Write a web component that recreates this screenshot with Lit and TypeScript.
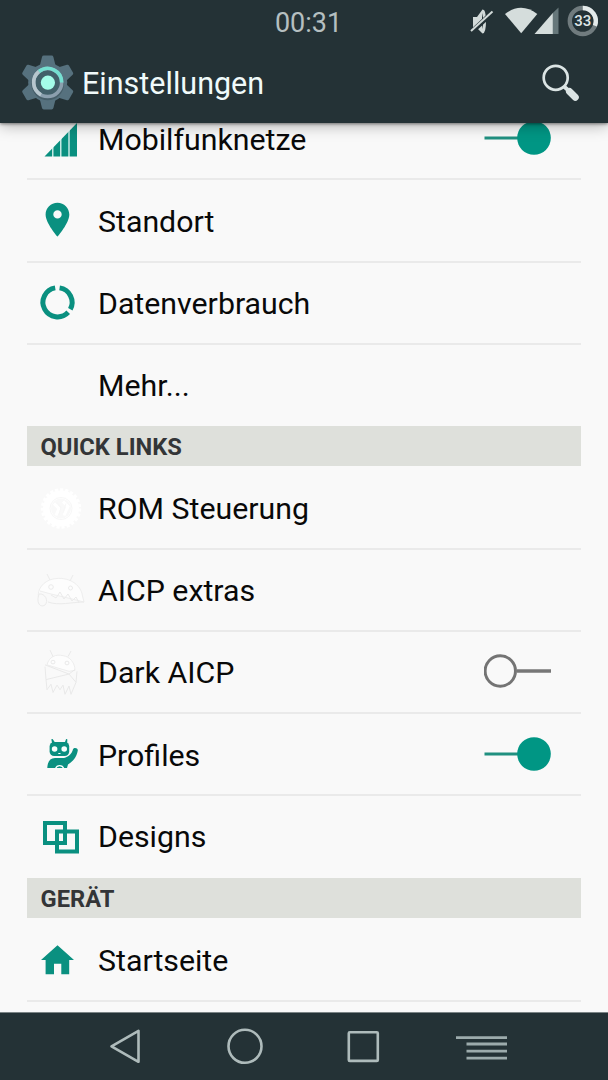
import { LitElement, html, css, svg, nothing, SVGTemplateResult } from "lit";
import { customElement, property } from "lit/decorators.js";

const TEAL = "#0a9080";

// Row icons are drawn on a 71x82 cell.
const icons: Record<string, SVGTemplateResult> = {
  signal: svg`<g transform="translate(0 -1)"><path fill=${TEAL} d="M17.5 59.5L50 26V59.5Z"/>
    <path stroke="#f4fffd" stroke-width="1.2" d="M25.8 48V60M33.8 40V60M42 32V60"/></g>`,
  pin: svg`<path transform="translate(0 -1.3)" fill=${TEAL} fill-rule="evenodd" d="M30.5 24C23.8 24 18.6 29.2 18.6 35.8C18.6 44.5 30.5 58 30.5 58S42.3 44.5 42.3 35.8C42.3 29.2 37.1 24 30.5 24ZM30.5 31.5a4.2 4.2 0 1 1 0 8.4a4.2 4.2 0 0 1 0-8.4Z"/>`,
  data: svg`<g transform="translate(0 -1.5)" fill="none" stroke=${TEAL} stroke-width="5">
    <path d="M32.6 26.4A14.6 14.6 0 0 1 43.3 47.8"/>
    <path d="M28.2 26.4A14.6 14.6 0 1 0 41.2 50.8"/></g>`,
  rom: svg`<g transform="translate(0 -.5)"><g fill="none" stroke="#ffffff"><circle cx="34" cy="42" r="14" stroke-width="8"/>
    <circle cx="34" cy="42" r="18.7" stroke-width="3" stroke-dasharray="3.1 2"/>
    <path stroke-width="3" d="M27 37l5 5-3 7M36 35l5 5-4 9"/></g>
    <g fill="none" stroke="#f7f7f7"><circle cx="34" cy="42" r="11"/><path d="M30 36l4 5-2 7M39 37l-3 9"/></g></g>`,
  extras: svg`<g transform="translate(0 1)"><path fill="#fdfdfd" stroke="#eeeeee" d="M11.5 46C10 39 16 30 26 28C41 25 54 33 55.5 45L57 51L41 47L24 43L13 40"/>
    <g fill="none" stroke="#ebebeb"><path d="M23 29L20 23M43 30L46 24M12 43C9 52 13 57 18 54C22 50 18 42 12 43M21 51C32 55 45 51 57 51M24 44L29 47L33 41L37 48L41 43L45 50L49 46L52 52"/>
    <circle cx="24" cy="36" r="2.3"/><circle cx="43.5" cy="37" r="2"/></g></g>`,
  dark: svg`<g transform="translate(0 2.5) scale(1 .92)"><path fill="#fdfdfd" stroke="#ececec" d="M20 33C22 24 29 21 36 23C43 24 48 31 48 39L42 40L20 33"/>
    <g fill="none" stroke="#e8e8e8"><path d="M26 24L23 17M41 24L44 18M18 33L42 43L48 38M18 35L19 49L42 43L49 52L50 40M19 49L20 60L24 54L26 63L30 55L33 60L36 55L38 65L42 56L44 65L49 52"/>
    <circle cx="26" cy="30" r="2"/><circle cx="40" cy="31" r="2"/></g></g>`,
  profiles: svg`<g transform="translate(0 1)"><g fill=${TEAL}>
    <path d="M25.2 28.5L24.3 24.3L25.6 24L28.4 28M37.6 28L39.1 24L40.3 24.3L40.2 29"/>
    <rect x="22.6" y="27" width="19.6" height="14" rx="4.5"/>
    <path d="M20.3 53C20.6 46.5 23 43 28 43H37C41.5 42 44.8 39 46 34.3C46.9 32.2 51 32.9 50.8 35.5C49.5 43 45 47 41 49.5L40 53Z"/></g>
    <g fill="#f6fffd"><circle cx="27.6" cy="34" r="2.8"/><circle cx="37.2" cy="34" r="2.8"/><path d="M31.3 38h2.2v1h-2.2z"/></g>
    <path fill="none" stroke="#f6fffd" stroke-width="1.2" d="M28.5 53.5A4.4 4.4 0 0 1 36.8 53.5"/></g>`,
  designs: svg`<g transform="translate(0 -.5)" fill="none" stroke=${TEAL} stroke-width="4"><rect x="18" y="27.5" width="20" height="20"/><rect x="30" y="36" width="20" height="20"/></g>`,
  home: svg`<path transform="translate(0 -1.7)" fill=${TEAL} d="M30.5 27L47 41.6H42.2V56H34.3V45.5H27V56H18.6V41.6H14Z"/>`,
};

@customElement("toggle-switch")
class ToggleSwitch extends LitElement {
  @property({ type: Boolean }) on = false;
  static styles = css`
    :host { display: block; width: 68px; height: 36px; }
    svg { display: block; }
  `;
  render() {
    return html`<svg width="68" height="36" viewBox="0 0 68 36">
      ${this.on
        ? svg`<path d="M.5 18H40" stroke="#209080" stroke-width="3.2"/><circle cx="50" cy="18" r="16.8" fill="#009684"/>`
        : svg`<path d="M33 18H67" stroke="#777" stroke-width="3.4"/><circle cx="16.3" cy="18" r="15.2" fill="none" stroke="#747474" stroke-width="3"/>`}
    </svg>`;
  }
}

@customElement("settings-row")
class SettingsRow extends LitElement {
  @property() icon = "";
  @property() label = "";
  @property() toggle = "";
  static styles = css`
    :host { display: block; }
    .row { display: flex; align-items: center; height: 82.25px; box-sizing: border-box; border-bottom: 2px solid #eaeaea; }
    :host([last]) .row { border-bottom-color: transparent; height: 81.25px; }
    .icon { width: 71px; height: 82px; flex: none; align-self: flex-start; }
    .label { flex: 1; font-size: 30.3px; line-height: 40px; color: #090909; white-space: nowrap; padding-top: 3px; }
    toggle-switch { margin-right: 29px; margin-bottom: 1px; }
  `;
  render() {
    return html`<div class="row">
      <svg class="icon" viewBox="0 0 71 82">${icons[this.icon] ?? nothing}</svg>
      <span class="label">${this.label}</span>
      ${this.toggle ? html`<toggle-switch ?on=${this.toggle === "on"}></toggle-switch>` : nothing}
    </div>`;
  }
}

@customElement("app-root")
class AppRoot extends LitElement {
  static styles = css`
    :host { display: flex; flex-direction: column; height: 1080px; width: 608px; overflow: hidden; background: #f9f9f9; font-family: Roboto, "Noto Sans", sans-serif; }
    .top { flex: none; height: 123px; background: #243236; position: relative; z-index: 1; box-shadow: 0 1px 3px rgba(0,0,0,.45), 0 3px 14px rgba(0,0,0,.28); }
    .status { height: 43px; display: grid; grid-template-columns: 1fr auto 1fr; align-items: center; }
    .clock { grid-column: 2; font-size: 27px; line-height: 32px; color: #b5bfc0; padding-left: 9px; padding-top: 2px; }
    .tray { justify-self: end; display: block; }
    .bar { height: 80px; display: flex; align-items: center; }
    .gear { margin-left: 18px; flex: none; }
    .title { flex: 1; font-size: 30.5px; color: #f0fafa; padding-left: 4px; }
    .search { margin-right: 20px; flex: none; }
    .list { flex: 1; min-height: 0; overflow: hidden; margin-top: -25px; padding: 0 27px; }
    .head { height: 40.3px; box-sizing: border-box; background: #dee0db; color: #333537; font-size: 23.7px; font-weight: 700; line-height: 42px; padding-left: 13.5px; margin-bottom: 1px; }
    .head.device { margin-bottom: 2px; }
    .nav { flex: none; height: 68px; box-sizing: border-box; background: #243236; border-top: 1px solid #7b8486; }
    svg { display: block; }
  `;
  render() {
    return html`
      <header class="top">
        <div class="status">
          <span class="clock">00:31</span>
          <svg class="tray" width="148" height="43" viewBox="460 0 148 43">
            <path fill="#d2dad9" d="M473 17H477L482.5 9.5Q486 9 486 21Q486 33.5 482.5 33.5L477 28H473Z"/>
            <path fill="#243236" d="M482 13Q484.5 21 482 29Z"/>
            <path d="M471 32.5L493 12" stroke="#243236" stroke-width="5"/>
            <path d="M471 31L492.5 11.5" stroke="#d2dad9" stroke-width="2"/>
            <path fill="#d5dddc" d="M505 14Q521 1.5 537.3 14L521.2 33.3Z"/>
            <path fill="#66777a" d="M552.5 13.3L558.5 7.5V34H552.5Z"/>
            <path fill="#d5dddc" d="M534.5 34L552.8 13V34Z"/>
            <circle cx="582.8" cy="21" r="13" fill="none" stroke="#707b7e" stroke-width="4.4"/>
            <path d="M582.8 8A13 13 0 0 1 594.9 25.8" fill="none" stroke="#e4eaea" stroke-width="4.4"/>
            <text x="582.8" y="26" text-anchor="middle" font-size="15" font-weight="500" fill="#dfe6e6">33</text>
          </svg>
        </div>
        <div class="bar">
          <svg class="gear" width="60" height="60" viewBox="18 53 60 60">
            <g fill="#56717e">
              <circle cx="47.7" cy="82.5" r="19.5"/>
              ${[0, 60, 120, 180, 240, 300].map(
                (a) => svg`<path transform="rotate(${a} 47.7 82.5)" d="M39.5 67L42 57Q42.3 55.6 43.8 55.6H51.6Q53.1 55.6 53.4 57L55.9 67Z"/>`
              )}
            </g>
            <circle cx="47.7" cy="84" r="16.3" fill="#465e69"/>
            <circle cx="47.7" cy="82.5" r="14" fill="#42606a" stroke="#8b9fae" stroke-width="3.6"/>
            <path d="M41 94.8A14 14 0 0 1 39 71.5" fill="none" stroke="#b6c6ce" stroke-width="3.6"/>
            <path d="M39 71.5A14 14 0 0 1 61.7 82.5" fill="none" stroke="#75dfd1" stroke-width="3.6"/>
            <circle cx="47.9" cy="82.7" r="7.1" fill="#a4fce9"/>
          </svg>
          <span class="title">Einstellungen</span>
          <svg class="search" width="54" height="60" viewBox="534 53 54 60">
            <circle cx="555.7" cy="77.8" r="12" fill="none" stroke="#dbe4e4" stroke-width="2.7"/>
            <path d="M563.5 86L569 91" stroke="#dbe4e4" stroke-width="4"/>
            <path d="M569.5 91.5L575.3 97.2" stroke="#dbe4e4" stroke-width="7" stroke-linecap="round"/>
          </svg>
        </div>
      </header>
      <main class="list">
        <settings-row icon="signal" label="Mobilfunknetze" toggle="on"></settings-row>
        <settings-row icon="pin" label="Standort"></settings-row>
        <settings-row icon="data" label="Datenverbrauch"></settings-row>
        <settings-row label="Mehr..." last></settings-row>
        <div class="head">QUICK LINKS</div>
        <settings-row icon="rom" label="ROM Steuerung"></settings-row>
        <settings-row icon="extras" label="AICP extras"></settings-row>
        <settings-row icon="dark" label="Dark AICP" toggle="off"></settings-row>
        <settings-row icon="profiles" label="Profiles" toggle="on"></settings-row>
        <settings-row icon="designs" label="Designs" last></settings-row>
        <div class="head device">GERÄT</div>
        <settings-row icon="home" label="Startseite"></settings-row>
      </main>
      <nav class="nav">
        <svg width="608" height="67" viewBox="0 1013 608 67">
          <g fill="none" stroke="#aebbbb" stroke-width="2.6" stroke-linejoin="round">
            <path d="M111.5 1046.3L138.5 1030.8V1061.8Z"/>
            <circle cx="245" cy="1046.3" r="16.5"/>
            <rect x="348.8" y="1032.3" width="29" height="28.6" rx="1"/>
          </g>
          <path d="M456 1037.7H507M466.5 1044H507M466.5 1051.2H507M466.5 1058.2H507" stroke="#9cabac" stroke-width="2.8"/>
        </svg>
      </nav>
    `;
  }
}
